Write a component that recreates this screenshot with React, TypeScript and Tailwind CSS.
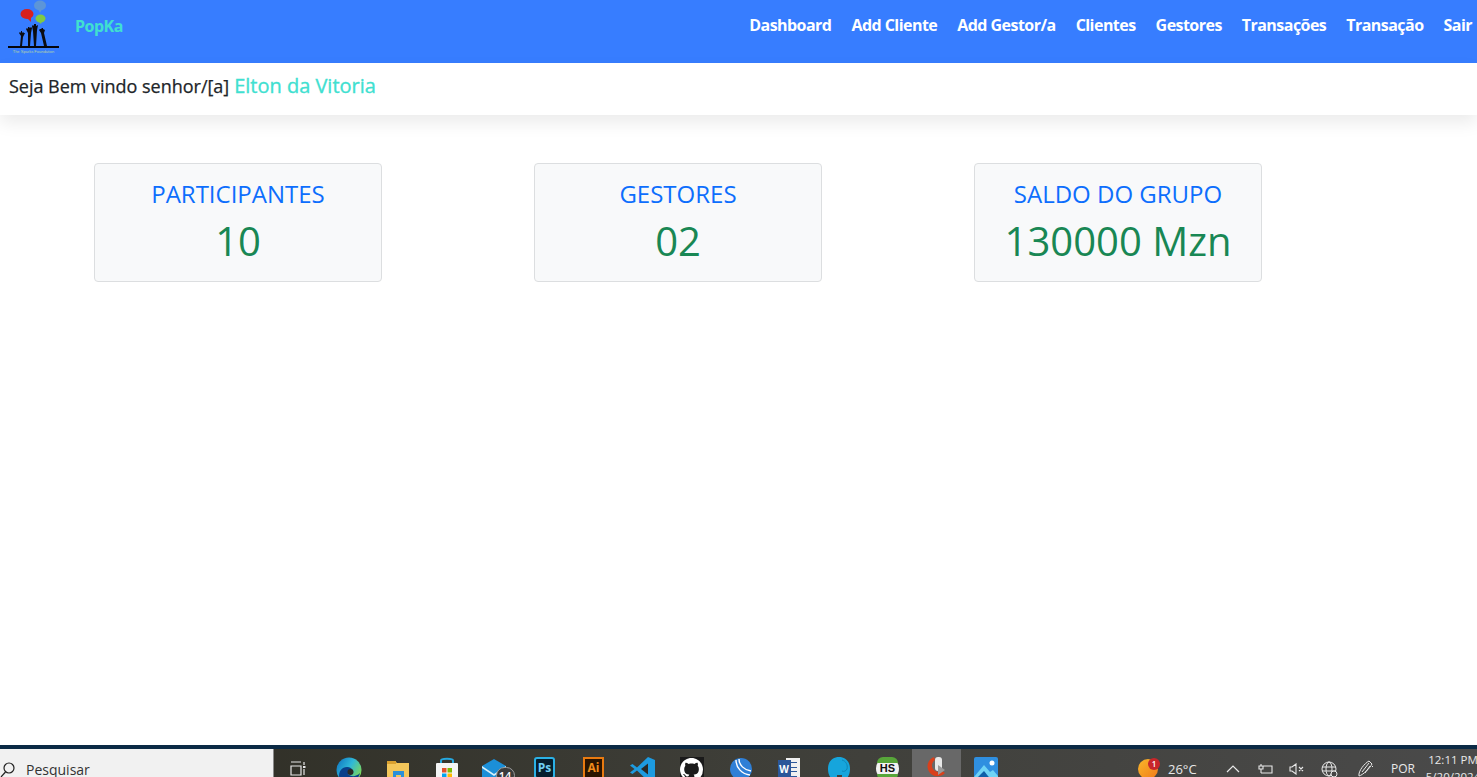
import React from "react";

const LINKS = ["Dashboard", "Add Cliente", "Add Gestor/a", "Clientes", "Gestores", "Transações", "Transação", "Sair"];
const CARDS = [
  ["PARTICIPANTES", "10"],
  ["GESTORES", "02"],
  ["SALDO DO GRUPO", "130000 Mzn"],
];

function Logo() {
  return (
    <svg width="54" height="56" viewBox="0 0 54 56" className="block">
      <ellipse cx="33" cy="5.500" rx="6" ry="5" fill="#5c95d8" />
      <path d="M31 9l2 4 2-4z" fill="#5c95d8" />
      <ellipse cx="20" cy="14" rx="6.500" ry="5" fill="#d8201f" />
      <path d="M20 18l4 4 0-5z" fill="#d8201f" />
      <ellipse cx="33.500" cy="18.500" rx="5" ry="4" fill="#80c943" />
      <path d="M32 22l2 2 1-3z" fill="#80c943" />
      <path d="M13 46l1-10-2-3 1-1 1 1 0-2 1 0 0 2 1-1 1 1 1 0-2 4-1 9zM21 46l0-13-2-4 1-1 1 1 0-2 1 0 1 1 1-1 1 1-1 5-1 13zM27 46l-1-15-1-5 1-1 1 1 0-2 2 0 0 2 2-1-1 5-1 16zM37 46l-3-13-2-3 1-1 1 0 1-1 1 0 0 1 2 1-1 3 3 13z" fill="#0c0c10" />
      <rect x="1" y="46" width="51" height="2" fill="#05050a" />
      <text x="26.500" y="53" textAnchor="middle" fill="#b4d6a8" fontSize="4" className="font-['Liberation_Sans',sans-serif]">The Sparks Foundation</text>
    </svg>
  );
}

function Tray({ children }: { children: React.ReactNode }) {
  return <div className="flex h-[28px] w-[49px] shrink-0 items-start justify-center pt-[5px]">{children}</div>;
}

function TaskIcons() {
  return (
    <div className="ml-px flex h-full items-start">
      <Tray>
        <svg width="16" height="20" viewBox="0 0 16 20" fill="none" stroke="#e6e6e6" strokeWidth="1.200" className="mr-[4px] mt-[7px]">
          <path d="M1 1h10M1 5h10v9H1zM1 18h10M14 1v3M14 8v6" />
          <rect x="13" y="5" width="2.500" height="2" fill="#e6e6e6" stroke="none" />
        </svg>
      </Tray>
      <Tray>
        <svg width="26" height="26" viewBox="0 0 26 26" className="mt-[3px]">
          <defs>
            <linearGradient id="e1" x1="0" y1="0" x2="1" y2="0.600"><stop offset="0" stopColor="#0c6fc0" /><stop offset="0.550" stopColor="#2fb8d8" /><stop offset="1" stopColor="#7cd75a" /></linearGradient>
          </defs>
          <circle cx="13" cy="13" r="12.500" fill="url(#e1)" />
          <path d="M9 26C2 24 1 15 7 11c4-2 9-1 10 3 1 3-3 4-5 3 3 3 8 3 12-1-1 6-9 12-15 10z" fill="#0a3f8a" />
          <circle cx="14.500" cy="15" r="3" fill="#2b2a24" />
        </svg>
      </Tray>
      <Tray>
        <svg width="24" height="24" viewBox="0 0 24 24" className="mt-[5px]">
          <path d="M1 2h8l2 2h12v22H1z" fill="#f3c65a" />
          <rect x="1" y="2" width="9" height="3" fill="#d9a02f" />
          <rect x="7" y="12" width="11" height="12" fill="#2a8fd8" />
          <rect x="10" y="16" width="5" height="8" fill="#f3c65a" />
        </svg>
      </Tray>
      <Tray>
        <svg width="24" height="26" viewBox="0 0 24 26" className="mt-[3px]">
          <path d="M6 7V3.500C6 1 18 1 18 3.500V7" fill="none" stroke="#25a8e0" strokeWidth="2" />
          <rect x="1" y="6" width="22" height="20" rx="1" fill="#f4f4f4" />
          <rect x="7" y="11" width="4.500" height="4.500" fill="#e2502c" />
          <rect x="12.500" y="11" width="4.500" height="4.500" fill="#7fba00" />
          <rect x="7" y="16.500" width="4.500" height="4.500" fill="#00a4ef" />
          <rect x="12.500" y="16.500" width="4.500" height="4.500" fill="#ffb900" />
        </svg>
      </Tray>
      <Tray>
        <div className="relative mt-[3px] h-[24px] w-[30px]">
          <svg width="26" height="24" viewBox="0 0 26 24" className="absolute left-0 top-[2px]">
            <path d="M1 7L13 0l12 7v17H1z" fill="#1b8fd8" />
            <path d="M1 7l12 8 12-8v2L13 17 1 9z" fill="#d7f0fb" />
          </svg>
          <div className="absolute left-[15px] top-[10px] flex h-[17px] w-[19px] items-start justify-center rounded-full border border-[#9c9c9c] bg-[#3b3b3b] text-[11px] font-semibold leading-[15px] text-white">14</div>
        </div>
      </Tray>
      <Tray>
        <div className="mt-[3px] flex h-[22px] w-[21px] items-center justify-center rounded-[3px] border-2 border-[#2bb1e6] bg-[#061e2e] text-[12px] font-bold text-[#6fd0f5]">Ps</div>
      </Tray>
      <Tray>
        <div className="mt-[3px] flex h-[22px] w-[21px] items-center justify-center border-2 border-[#e87a10] bg-[#2a1400] text-[12px] font-bold text-[#f08c1c]">Ai</div>
      </Tray>
      <Tray>
        <svg width="25" height="24" viewBox="0 0 25 24" className="mt-[3px]">
          <path d="M18 0l7 3v18l-7 3L7 13.500 2.500 17 0 15.500 4.500 12 0 8.500 2.500 7 7 10.500z" fill="#1d9be0" />
          <path d="M18 6.500v11L11 12z" fill="#2a2a26" />
        </svg>
      </Tray>
      <Tray>
        <div className="mt-[3px] flex h-[24px] w-[24px] items-center justify-center bg-[#1a1a1a]">
          <svg width="23" height="23" viewBox="0 0 16 16" fill="#fff">
            <path d="M8 0C3.580 0 0 3.580 0 8c0 3.540 2.290 6.530 5.470 7.590.4.070.55-.17.550-.38 0-.19-.01-.82-.01-1.490-2.010.370-2.530-.49-2.690-.94-.09-.23-.48-.94-.82-1.130-.28-.15-.68-.52-.01-.53.630-.01 1.080.58 1.230.82.720 1.210 1.870.870 2.330.660.070-.52.280-.87.510-1.070-1.780-.2-3.640-.89-3.640-3.950 0-.87.310-1.590.820-2.150-.08-.2-.36-1.020.08-2.120 0 0 .67-.21 2.200.820.640-.18 1.320-.27 2-.27s1.360.09 2 .27c1.530-1.040 2.200-.82 2.200-.82.440 1.100.16 1.920.08 2.120.51.560.82 1.270.82 2.150 0 3.070-1.870 3.750-3.650 3.950.290.25.540.73.540 1.480 0 1.070-.01 1.930-.01 2.200 0 .21.150.46.550.38A8.010 8.010 0 0 0 16 8c0-4.420-3.580-8-8-8z" />
          </svg>
        </div>
      </Tray>
      <Tray>
        <svg width="22" height="24" viewBox="0 0 22 24" className="mt-[3px]">
          <circle cx="11" cy="12" r="11" fill="#2f7fd6" />
          <path d="M6 3c0 8 6 14 14 15M9 2c0 6 5 11 12 12" fill="none" stroke="#fff" strokeWidth="1.400" />
        </svg>
      </Tray>
      <Tray>
        <div className="relative mt-[3px] h-[24px] w-[24px]">
          <div className="absolute left-[8px] top-[1px] flex h-[23px] w-[14px] flex-col justify-evenly bg-[#f0f0f0] px-[3px]">
            <div className="h-px bg-[#2b579a]" /><div className="h-px bg-[#2b579a]" /><div className="h-px bg-[#2b579a]" /><div className="h-px bg-[#2b579a]" />
          </div>
          <div className="absolute left-0 top-[3px] flex h-[19px] w-[13px] items-center justify-center bg-[#2b579a] text-[10px] font-bold text-white">W</div>
        </div>
      </Tray>
      <Tray>
        <svg width="24" height="24" viewBox="0 0 24 24" className="mt-[3px]">
          <path d="M1 12C1 4 6 0 12 0s11 4 11 12c0 5-2 9-5 11h-3v-5h-5v5H6c-3-2-5-6-5-11z" fill="#16a5dc" />
          <path d="M15 3c4 1 6 5 5 9-1 2-3 3-5 2" fill="none" stroke="#0d86b8" strokeWidth="1" />
        </svg>
      </Tray>
      <Tray>
        <div className="relative mt-[3px] flex h-[23px] w-[23px] items-center justify-center rounded-full bg-[#f2f2f2]">
          <div className="absolute left-[1px] right-[1px] top-0 h-[6px] rounded-t-full bg-[#57a639]" />
          <div className="absolute bottom-0 left-[1px] right-[1px] h-[6px] rounded-b-full bg-[#57a639]" />
          <span className="relative font-['Liberation_Sans',sans-serif] text-[11px] font-bold text-[#111]">HS</span>
        </div>
      </Tray>
      <div className="flex h-[28px] w-[49px] shrink-0 items-start justify-center bg-[#686868] pt-[5px]">
        <svg width="24" height="28" viewBox="0 0 24 28" className="mt-[2px]">
          <path d="M9 1a10 10 0 1 0 11 16l-3-2a6.500 6.500 0 1 1-7-11z" fill="#d8401c" />
          <rect x="10" y="1" width="7" height="14" rx="3" fill="#e8e8e8" />
          <path d="M13 9l7 5-7 5z" fill="#9a9a9a" />
          <rect x="4" y="21" width="14" height="7" fill="#1d6fb8" />
        </svg>
      </div>
      <Tray>
        <svg width="24" height="24" viewBox="0 0 24 24" className="mt-[3px]">
          <rect width="24" height="24" rx="2" fill="#2f8fe0" />
          <circle cx="18" cy="6" r="2.500" fill="#fff" />
          <path d="M0 20L10 8l6 7 3-2 5 6v5H0z" fill="#6fd3f5" />
          <path d="M0 24l10-10 8 10z" fill="#0e5fa8" />
        </svg>
      </Tray>
    </div>
  );
}

function SystemTray() {
  const cls = "text-[#e8e8e8]";
  return (
    <div className="flex h-full shrink-0 items-start">
      <div className="relative mt-[10px] h-[20px] w-[20px] rounded-full bg-gradient-to-br from-[#f8b62a] to-[#f07a1a]">
        <div className="absolute left-[10px] top-[-1px] flex h-[12px] w-[12px] items-center justify-center rounded-full bg-[#c8262a] text-[8px] font-semibold text-white">1</div>
      </div>
      <span className={`${cls} ml-[10px] mt-[11px] w-[30px] text-[13px] leading-[18px]`}>26°C</span>
      <svg width="14" height="8" viewBox="0 0 14 8" fill="none" stroke="#e8e8e8" strokeWidth="1.200" className="ml-[28px] mt-[16px]"><path d="M1 7l6-6 6 6" /></svg>
      <svg width="16" height="12" viewBox="0 0 16 12" fill="none" stroke="#e8e8e8" strokeWidth="1.100" className="ml-[17px] mt-[14px]"><path d="M4 3h11v7H4M4 1v2M2 3h4v3H2zM4 6v4" /></svg>
      <svg width="15" height="12" viewBox="0 0 15 12" fill="none" stroke="#e8e8e8" strokeWidth="1.100" className="ml-[16px] mt-[14px]"><path d="M1 4h2l4-3v10L3 8H1zM10 4l4 4M14 4l-4 4" /></svg>
      <svg width="17" height="17" viewBox="0 0 17 17" fill="none" stroke="#e8e8e8" strokeWidth="1" className="ml-[17px] mt-[12px]">
        <circle cx="8" cy="8" r="7" /><ellipse cx="8" cy="8" rx="3" ry="7" /><path d="M1 6h14M1 10h14" />
        <circle cx="13" cy="13" r="3" fill="#444" />
      </svg>
      <svg width="17" height="20" viewBox="0 0 17 20" fill="none" stroke="#e8e8e8" strokeWidth="1" className="ml-[19px] mt-[10px]"><path d="M2 17C1 12 8 4 12 2l3 3c-2 4-9 11-13 12zM5 13l7-9M8 14l5-7M15 7l1 1" /></svg>
      <span className={`${cls} ml-[17px] mt-[11px] w-[24px] text-[12px] leading-[17px]`}>POR</span>
      <div className={`${cls} ml-[14px] mt-[2px] flex w-[48px] flex-col items-center text-[11.5px] leading-[17px]`}>
        <span className="whitespace-nowrap">12:11 PM</span>
        <span className="whitespace-nowrap">5/20/2024</span>
      </div>
    </div>
  );
}

export default function App() {
  return (
    <div className="flex h-[777px] w-full flex-col overflow-hidden bg-white font-['Open_Sans',sans-serif]">
      <nav className="flex h-[63px] shrink-0 items-start justify-between bg-[#377dff] pl-[7px] pr-[5px]">
        <div className="flex items-start">
          <Logo />
          <span className="ml-[14px] mt-[14px] text-[16px] font-bold leading-[24px] tracking-[-0.5px] text-[#40e0d0]">PopKa</span>
        </div>
        <div className="mt-[13px] flex gap-[20px]">
          {LINKS.map((l) => (
            <span key={l} className="text-[16px] font-bold leading-[24px] tracking-[-0.54px] text-white">{l}</span>
          ))}
        </div>
      </nav>

      <div className="relative flex h-[52px] shrink-0 items-start bg-white pl-[9px] pt-[9px] shadow-[0_8px_16px_rgba(0,0,0,0.08)]">
        <span className="mt-[1px] text-[18px] font-medium leading-[27px] tracking-[-0.02px] text-[#212529] [-webkit-text-stroke:0.25px_#212529]">Seja Bem vindo senhor/[a]</span>
        <span className="ml-[5px] text-[20px] font-medium leading-[27px] tracking-[-0.01px] text-[#40e0d0] [-webkit-text-stroke:0.35px_#40e0d0]">Elton da Vitoria</span>
      </div>

      <main className="flex flex-1 items-start gap-[152px] bg-white pl-[94px] pt-[48px]">
        {CARDS.map(([title, value]) => (
          <div key={title} className="flex h-[119px] w-[288px] flex-col items-center rounded-[4px] border border-[#dcdee0] bg-[#f8f9fa] pt-[12px]">
            <span className="text-[24px] leading-[36px] text-[#0d6efd]">{title}</span>
            <span className="mt-[-1px] text-[40px] leading-[60px] text-[#198754]">{value}</span>
          </div>
        ))}
      </main>

      <footer className="flex h-[32px] shrink-0 flex-col overflow-hidden">
        <div className="h-[4px] shrink-0 bg-[#0b2a45]" />
        <div className="flex h-[28px] items-start overflow-hidden bg-gradient-to-r from-[#2b2a20] via-[#3e3e38] to-[#4a4a4a]">
          <div className="flex h-full w-[274px] shrink-0 items-start border-r border-[#8a8a8a] bg-[#f1f1f1] pt-[13px]">
            <svg width="15" height="16" viewBox="0 0 15 16" fill="none" stroke="#222" strokeWidth="1.200"><circle cx="9" cy="6" r="5" /><path d="M5.500 10L1 15" /></svg>
            <span className="ml-[11px] mt-[-3px] text-[14px] leading-[21px] text-[#333]">Pesquisar</span>
          </div>
          <div className="flex h-full flex-1 items-start justify-between">
            <TaskIcons />
            <SystemTray />
          </div>
        </div>
      </footer>
    </div>
  );
}
